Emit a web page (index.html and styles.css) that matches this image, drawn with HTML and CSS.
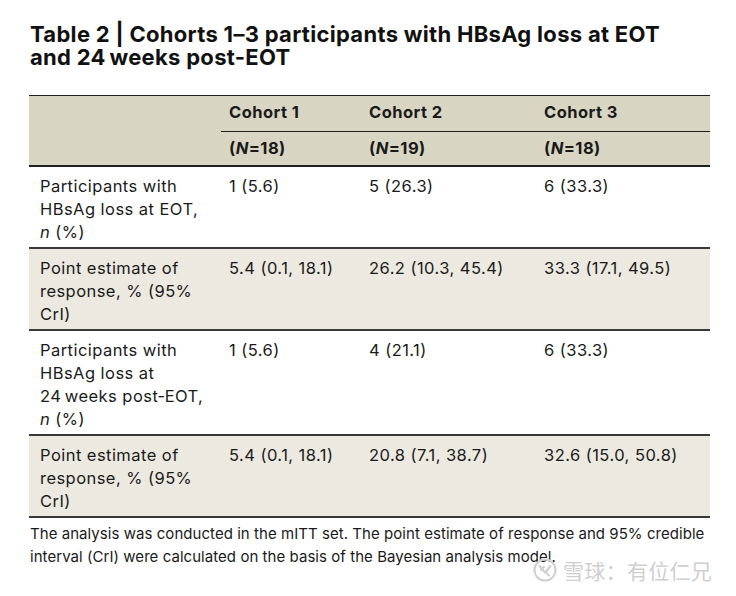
FILE: index.html
```html
<!DOCTYPE html>
<html lang="en">
<head>
<meta charset="utf-8">
<title>Table 2</title>
<link rel="stylesheet" href="styles.css">
</head>
<body>
<main class="page">
  <h1 class="title">Table 2 | Cohorts 1–3 participants with HBsAg loss at EOT and 24&#8239;weeks post-EOT</h1>
  <table class="data">
    <colgroup>
      <col class="c-label">
      <col class="c-1">
      <col class="c-2">
      <col class="c-3">
    </colgroup>
    <thead>
      <tr class="h-top">
        <th class="blank" rowspan="2"></th>
        <th>Cohort 1</th>
        <th>Cohort 2</th>
        <th>Cohort 3</th>
      </tr>
      <tr class="h-n">
        <th>(<i>N</i>=18)</th>
        <th>(<i>N</i>=19)</th>
        <th>(<i>N</i>=18)</th>
      </tr>
    </thead>
    <tbody>
      <tr>
        <td>Participants with HBsAg loss at EOT, <i>n</i> (%)</td>
        <td>1 (5.6)</td>
        <td>5 (26.3)</td>
        <td>6 (33.3)</td>
      </tr>
      <tr class="shade">
        <td>Point estimate of response, % (95% CrI)</td>
        <td>5.4 (0.1, 18.1)</td>
        <td>26.2 (10.3, 45.4)</td>
        <td>33.3 (17.1, 49.5)</td>
      </tr>
      <tr>
        <td>Participants with HBsAg loss at 24&#8239;weeks post&#8209;EOT, <i>n</i> (%)</td>
        <td>1 (5.6)</td>
        <td>4 (21.1)</td>
        <td>6 (33.3)</td>
      </tr>
      <tr class="shade">
        <td>Point estimate of response, % (95% CrI)</td>
        <td>5.4 (0.1, 18.1)</td>
        <td>20.8 (7.1, 38.7)</td>
        <td>32.6 (15.0, 50.8)</td>
      </tr>
    </tbody>
  </table>
  <p class="note">The analysis was conducted in the mITT set. The point estimate of response and 95% credible interval (CrI) were calculated on the basis of the Bayesian analysis model.</p>
  <div class="watermark">
    <svg class="wm-logo" viewBox="0 0 24 24" width="24" height="24" aria-hidden="true">
      <circle cx="12" cy="12" r="10.5" fill="none" stroke="#cfcfcf" stroke-width="2"/>
      <path d="M6.5 8 L12 14.5 M11 8.5 L8 12 M17.5 8 L12.5 14 L16 17.5" fill="none" stroke="#cfcfcf" stroke-width="2" stroke-linecap="round"/>
    </svg>
    <span class="wm-text">雪球：有位仁兄</span>
  </div>
</main>
</body>
</html>
```

FILE: styles.css
```css
html, body {
  margin: 0;
  padding: 0;
  background: #ffffff;
}

.page {
  position: relative;
  width: 736px;
  height: 596px;
  padding: 23px 26px 0 29px;
  box-sizing: border-box;
  font-family: Inter, "Liberation Sans", "Noto Sans CJK SC", sans-serif;
  color: #1a1a1a;
}

.title {
  max-width: 655px;
  margin: 0 0 26px 1px;
  font-size: 22px;
  line-height: 23px;
  font-weight: 700;
  letter-spacing: 0.3px;
  color: #111;
}

.data {
  width: 681px;
  border-collapse: collapse;
  table-layout: fixed;
  font-size: 16.5px;
  line-height: 23px;
  letter-spacing: 0.45px;
}

.c-label { width: 192px; }
.c-1 { width: 140px; }
.c-2 { width: 175px; }
.c-3 { width: 174px; }

.data thead {
  background: #d9d5c3;
}

.data th {
  text-align: left;
  font-weight: 700;
  vertical-align: top;
}

.h-top th {
  padding: 5px 8px 7px;
  border-top: 1px solid #1e1e1e;
}

.h-top th:not(.blank) {
  border-bottom: 1px solid #1e1e1e;
}

.h-n th {
  padding: 5px 8px 5px;
}

.h-n th, .h-top .blank {
  border-bottom: 2px solid #1e1e1e;
}

.data td {
  padding: 8px 8px 3px;
  vertical-align: top;
  text-align: left;
}

.data td:first-child {
  padding-left: 11px;
}

.data tbody tr {
  border-bottom: 2px solid #3a3a3a;
}

.shade {
  background: #ece9e0;
}

.note {
  margin: 4px 0 0 1px;
  font-size: 15px;
  line-height: 23px;
  letter-spacing: 0.05px;
  color: #1a1a1a;
}

.watermark {
  position: absolute;
  left: 533px;
  top: 557px;
  display: flex;
  align-items: center;
  gap: 6px;
  color: #cfcfcf;
  text-shadow: 0 0 2px #fff, 0 0 2px #fff;
}

.wm-logo {
  display: block;
}

.wm-text {
  font-family: "Noto Sans CJK SC", sans-serif;
  font-size: 21px;
  line-height: 26px;
  letter-spacing: 0.3px;
}
```
